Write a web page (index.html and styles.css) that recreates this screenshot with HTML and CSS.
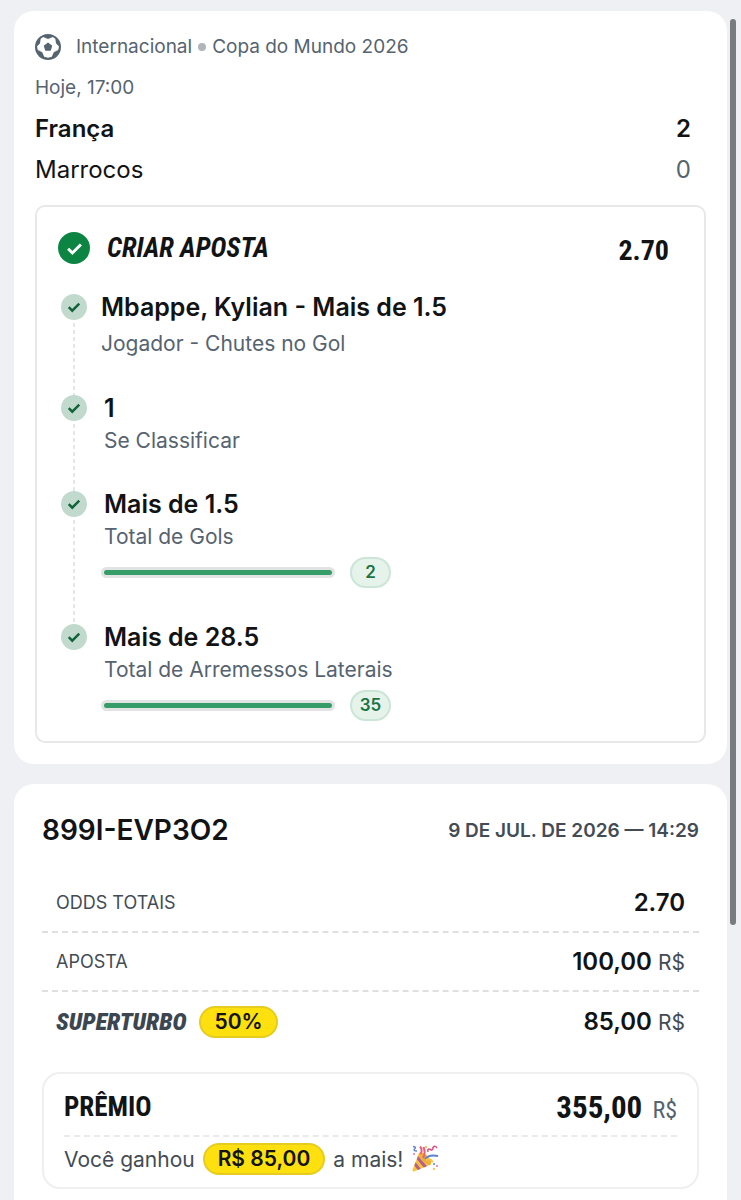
FILE: index.html
```
<!DOCTYPE html>
<html lang="pt-BR">
<head>
    <meta charset="UTF-8">
    <meta name="viewport" content="width=device-width, initial-scale=1.0">
    <title>Aposta</title>
    <link rel="stylesheet" href="styles.css">
</head>
<body>
    <!-- check shape shared by all the icons -->
    <svg class="defs" aria-hidden="true">
        <symbol id="check" viewBox="0 0 16 16">
            <path d="M2 8.2 L6 12.2 L14 4.2" fill="none" stroke="currentColor" stroke-width="2.8"/>
        </symbol>
    </svg>

    <main class="page">
        <section class="card match">
            <div class="line league">
                <svg class="ball" viewBox="0 0 26 26" aria-hidden="true">
                    <circle cx="13" cy="13" r="13" fill="#566370"/>
                    <path d="M8.2 2.9 L13 5 L17.8 2.9 L20.3 4.8 L21 9.2 L24 12.6 L23.2 16 L18.8 18.2 L16.8 22.8 L13 23.8 L9.2 22.8 L7.2 18.2 L2.8 16 L2 12.6 L5 9.2 L5.7 4.8 Z" fill="#fff"/>
                    <path d="M13 8.6 L17.3 11.7 L15.7 16.8 L10.3 16.8 L8.7 11.7 Z" fill="#566370"/>
                </svg>
                <span>Internacional</span>
                <span class="dot"></span>
                <span>Copa do Mundo 2026</span>
            </div>
            <div class="line date">Hoje, 17:00</div>
            <div class="line team winner"><span>França</span><span>2</span></div>
            <div class="line team"><span>Marrocos</span><span class="lost">0</span></div>

            <div class="bet">
                <div class="bet-header">
                    <span class="check-big"><svg><use href="#check"/></svg></span>
                    <h2>CRIAR APOSTA</h2>
                    <span class="bet-odds">2.70</span>
                </div>
                <ul class="legs">
                    <li class="leg player">
                        <span class="check-small"><svg><use href="#check"/></svg></span>
                        <div class="leg-body">
                            <h3>Mbappe, Kylian - Mais de 1.5</h3>
                            <p>Jogador - Chutes no Gol</p>
                        </div>
                    </li>
                    <li class="leg">
                        <span class="check-small"><svg><use href="#check"/></svg></span>
                        <div class="leg-body">
                            <h3>1</h3>
                            <p>Se Classificar</p>
                        </div>
                    </li>
                    <li class="leg">
                        <span class="check-small"><svg><use href="#check"/></svg></span>
                        <div class="leg-body">
                            <h3>Mais de 1.5</h3>
                            <p>Total de Gols</p>
                            <div class="stat"><div class="bar"><div class="bar-fill"></div></div><span class="count">2</span></div>
                        </div>
                    </li>
                    <li class="leg">
                        <span class="check-small"><svg><use href="#check"/></svg></span>
                        <div class="leg-body">
                            <h3>Mais de 28.5</h3>
                            <p>Total de Arremessos Laterais</p>
                            <div class="stat"><div class="bar"><div class="bar-fill"></div></div><span class="count">35</span></div>
                        </div>
                    </li>
                </ul>
            </div>
        </section>

        <section class="card ticket">
            <div class="ticket-header">
                <h1>899I-EVP3O2</h1>
                <time datetime="2026-07-09T14:29">9 DE JUL. DE 2026 — 14:29</time>
            </div>
            <dl class="totals">
                <div class="row"><dt>ODDS TOTAIS</dt><dd>2.70</dd></div>
                <div class="row"><dt>APOSTA</dt><dd>100,00 <small>R$</small></dd></div>
                <div class="row">
                    <dt><span class="turbo">SUPERTURBO</span><span class="pill">50%</span></dt>
                    <dd>85,00 <small>R$</small></dd>
                </div>
            </dl>
            <div class="prize">
                <div class="prize-header">
                    <h2>PRÊMIO</h2>
                    <span class="prize-value">355,00 <small>R$</small></span>
                </div>
                <div class="prize-extra">
                    <span>Você ganhou</span>
                    <span class="pill">R$ 85,00</span>
                    <span>a mais!</span>
                    <svg class="party" viewBox="0 0 28 28" role="img" aria-label="festa">
                        <path d="M8 8 L1.5 25 Q1 27 3.5 26.3 L20 19.5 Z" fill="#f9c23c"/>
                        <path d="M7 11 L16 21.2 L12.8 22.5 L5.8 14.3 Z M4.6 17.2 L9.8 23.7 L6.8 25 L3.4 20.4 Z" fill="#b4608f"/>
                        <ellipse cx="14" cy="13.5" rx="3.6" ry="8" transform="rotate(-45 14 13.5)" fill="#f0ae3c"/>
                        <path d="M12 13 Q15 8 12.5 2 M9.5 9 Q12 5 9 1.5" fill="none" stroke="#e8607a" stroke-width="2"/>
                        <path d="M14 14 Q18 9 27 11" fill="none" stroke="#5a82cf" stroke-width="2"/>
                        <path d="M2 1.5 Q6 2 3.5 4 Q2 6 6 6" fill="none" stroke="#5a82cf" stroke-width="1.5"/>
                        <path d="M17 7 Q16 3 19.5 4.5 Q22 6 22 2.5 Q24 0 26 3" fill="none" stroke="#d84f78" stroke-width="1.5"/>
                        <path d="M15 15 Q19 13 22 17" fill="none" stroke="#f4c748" stroke-width="2"/>
                        <circle cx="15" cy="2" r="1" fill="#f4b436"/>
                        <circle cx="23" cy="19" r="1" fill="#5a82cf"/>
                        <circle cx="26" cy="21" r="1" fill="#e87c9b"/>
                        <circle cx="23" cy="24" r="1" fill="#f4b436"/>
                        <circle cx="3" cy="9" r="1" fill="#e87c9b"/>
                    </svg>
                </div>
            </div>
        </section>
    </main>
    <div class="scroll-thumb"></div>
</body>
</html>
```

FILE: styles.css
```
* {
    box-sizing: border-box;
}
body {
    margin: 0;
    background-color: #eff0f3;
    color: #111315;
    font-family: Inter, sans-serif;
}
h1, h2, h3, p, ul, dl, dd {
    margin: 0;
    padding: 0;
}
.defs {
    display: none;
}
.page {
    display: flex;
    flex-direction: column;
    gap: 20px;
    min-height: 100vh;
    padding: 11px 14px 0;
}
.card {
    background-color: #fff;
    border-radius: 20px;
}
.match {
    padding: 15px 21px 21px;
}
.line {
    display: flex;
    align-items: center;
    height: 41px;
    font-size: 19px;
    color: #566370;
}
.ball {
    width: 26px;
    height: 26px;
    margin-right: 15px;
}
.dot {
    width: 8px;
    height: 8px;
    margin: 0 6px;
    border-radius: 50%;
    background-color: #b0b5ba;
}
.team {
    justify-content: space-between;
    padding-right: 15px;
    font-size: 24px;
    color: #111315;
}
.winner {
    font-weight: 600;
}
.lost {
    color: #566370;
}
.bet {
    margin-top: 15px;
    padding: 23px 21px 20px;
    border: 2px solid #e7e8ea;
    border-radius: 10px;
}
.bet-header {
    display: flex;
    align-items: center;
    height: 36px;
    margin-bottom: 28px;
    padding-right: 14px;
}
.bet-header h2 {
    flex: 1;
    font-family: "Roboto Condensed", "Liberation Sans Narrow", sans-serif;
    font-size: 27px;
    font-style: italic;
}
.bet-odds {
    align-self: flex-end;
    font-family: "Roboto Condensed", "Liberation Sans Narrow", sans-serif;
    font-size: 28px;
    font-weight: 700;
    line-height: 30px;
}
.check-big, .check-small {
    display: flex;
    flex: none;
    align-items: center;
    justify-content: center;
    border-radius: 50%;
}
.check-big {
    width: 32px;
    height: 32px;
    margin-right: 17px;
    background-color: #0c8543;
    color: #fff;
}
.check-big svg {
    width: 17px;
    height: 17px;
}
.check-small {
    width: 26px;
    height: 26px;
    background-color: #c1dacd;
    color: #12623a;
}
.check-small svg {
    width: 14px;
    height: 14px;
}
.legs {
    padding-left: 3px;
    list-style: none;
}
.leg {
    position: relative;
    display: flex;
    gap: 17px;
    padding-bottom: 36px;
}
.leg:last-child {
    padding-bottom: 0;
}
.leg:not(:last-child)::before {
    content: "";
    position: absolute;
    top: 26px;
    bottom: 0;
    left: 12px;
    width: 2px;
    background: repeating-linear-gradient(transparent 0 3px, #e3e5e7 3px 7px);
}
.player {
    gap: 14px;
}
.leg h3 {
    font-size: 25px;
    font-weight: 600;
    line-height: 26px;
}
.leg p {
    margin-top: 6px;
    font-size: 21px;
    line-height: 28px;
    color: #566370;
}
.player p {
    margin-top: 10px;
    margin-bottom: 1px;
}
.stat {
    display: flex;
    align-items: center;
    gap: 15px;
    margin: 6px 0 0 -3px;
}
.bar {
    width: 234px;
    padding: 3px;
    border-radius: 6px;
    background-color: #e1e4e3;
}
.bar-fill {
    height: 5px;
    border-radius: 3px;
    background-color: #369d69;
}
.count {
    width: 41px;
    height: 31px;
    border: 2px solid #cbe5d7;
    border-radius: 16px;
    background-color: #e5f3eb;
    color: #1d7443;
    font-size: 17px;
    font-weight: 600;
    line-height: 27px;
    text-align: center;
}
.ticket {
    flex: 1;
    padding: 28px 28px 12px;
    border-radius: 20px 20px 0 0;
}
.ticket-header {
    display: flex;
    align-items: center;
    justify-content: space-between;
    height: 36px;
    margin-bottom: 26px;
}
.ticket-header h1 {
    font-size: 28px;
    font-weight: 600;
}
.ticket-header time {
    font-size: 19px;
    font-weight: 600;
    color: #434c55;
}
.row {
    display: flex;
    align-items: center;
    justify-content: space-between;
    height: 59px;
    padding: 0 14px;
    border-bottom: 2px dashed #dedfe1;
}
.row:last-child {
    border-bottom: none;
}
.row dt {
    display: flex;
    align-items: center;
    font-size: 18px;
    color: #434c55;
}
.row dd {
    font-size: 24px;
    font-weight: 600;
}
.row small {
    font-size: 21px;
    font-weight: 400;
    color: #434c55;
}
.turbo {
    margin-right: 13px;
    font-family: "Roboto Condensed", "Liberation Sans Narrow", sans-serif;
    font-size: 24px;
    font-style: italic;
    font-weight: 900;
    color: #3c4650;
}
.pill {
    padding: 0 13px;
    border: 2px solid #e6cb20;
    border-radius: 16px;
    background-color: #ffe00f;
    color: #111315;
    font-size: 21px;
    font-weight: 600;
    line-height: 28px;
}
.prize {
    margin-top: 21px;
    padding: 11px 20px 10px;
    border: 2px solid #eeeff0;
    border-radius: 18px;
}
.prize-header {
    display: flex;
    align-items: center;
    justify-content: space-between;
    height: 52px;
    padding-bottom: 6px;
    border-bottom: 2px dashed #e9eaeb;
    font-family: "Roboto Condensed", "Liberation Sans Narrow", sans-serif;
}
.prize-header h2 {
    font-size: 27px;
}
.prize-value {
    font-size: 31px;
    font-weight: 700;
}
.prize-value small {
    margin-left: 3px;
    font-size: 24px;
    font-weight: 400;
    color: #566370;
}
.prize-extra {
    display: flex;
    align-items: center;
    gap: 8px;
    height: 40px;
    padding-top: 4px;
    font-size: 21px;
    color: #434c55;
}
.party {
    width: 28px;
    height: 28px;
}
.scroll-thumb {
    position: fixed;
    top: 19px;
    right: 5px;
    width: 6px;
    height: 75.5%;
    border-radius: 3px;
    background-color: #797c7f;
}
```
